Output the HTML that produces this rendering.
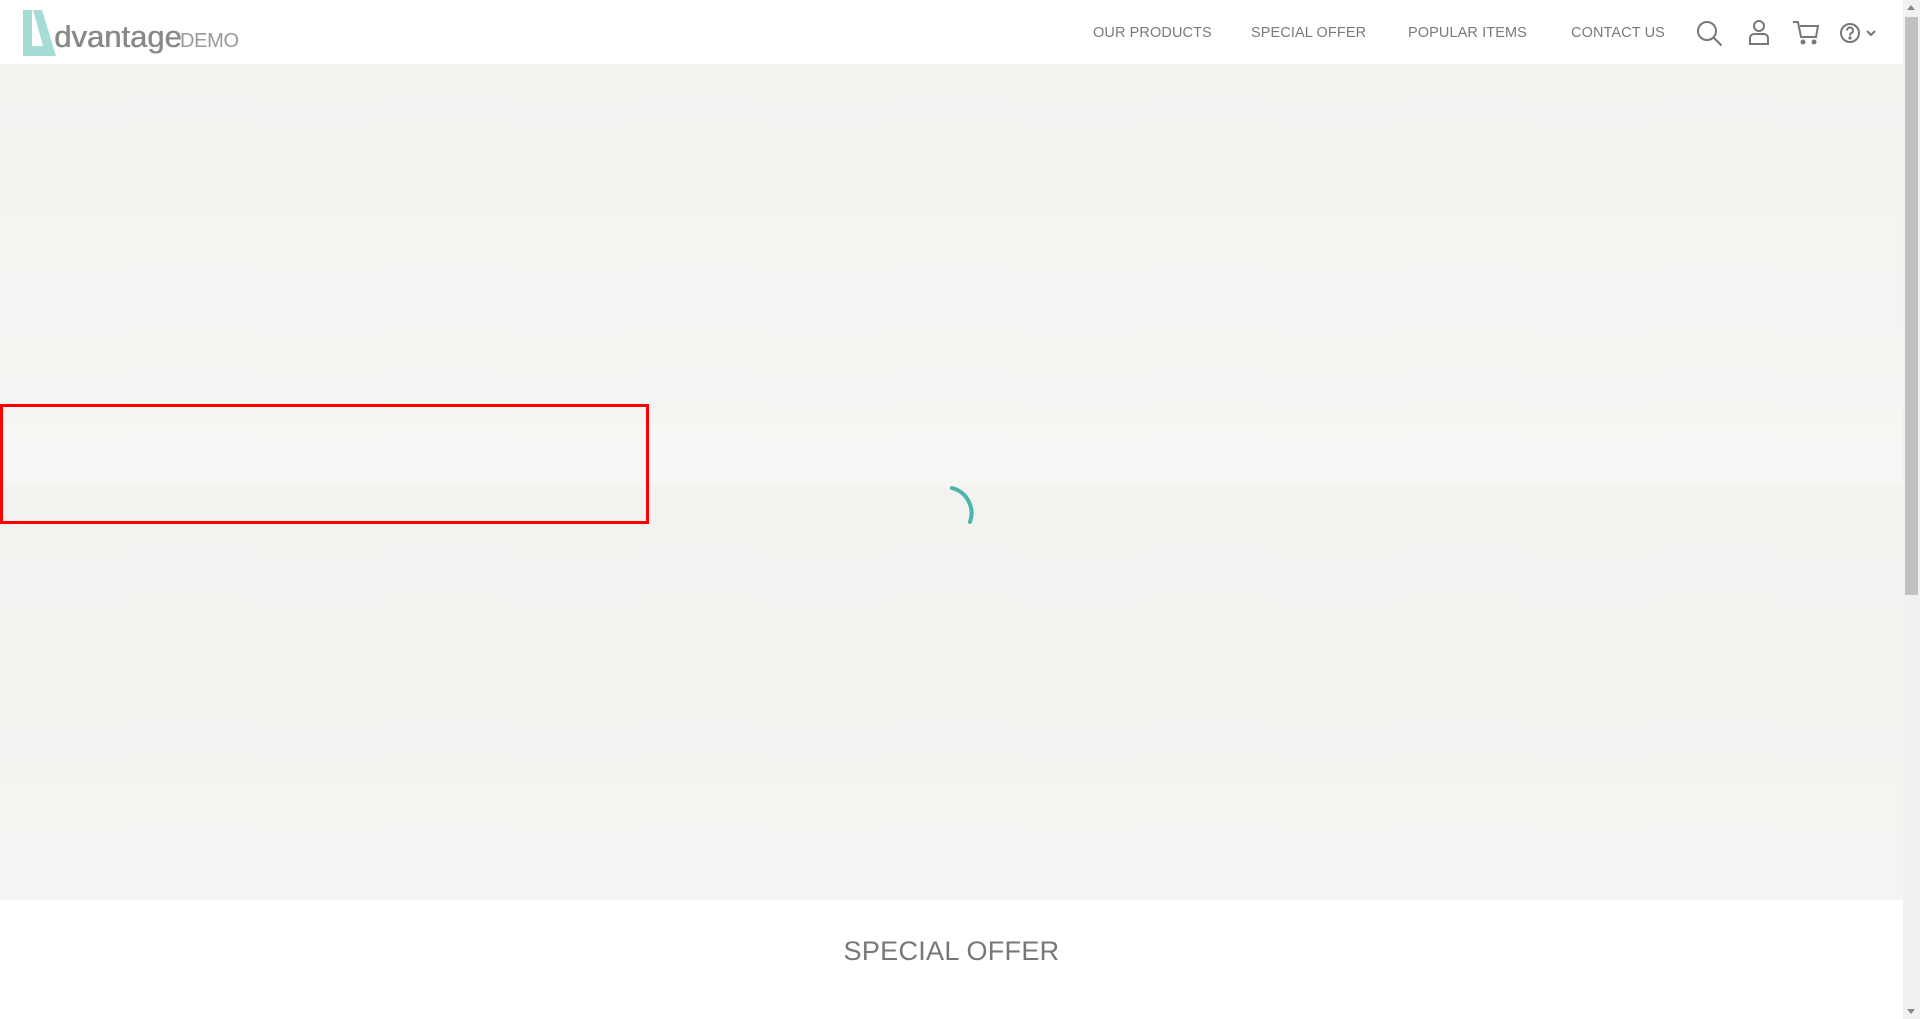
<!DOCTYPE html>
<html><head><meta charset="utf-8"><style>
*{margin:0;padding:0;box-sizing:border-box}
html,body{width:1920px;height:1019px;overflow:hidden;background:#fff;font-family:"Liberation Sans",sans-serif}
.hdr{position:absolute;left:0;top:0;width:1903px;height:64px;background:#fff}
.logo{position:absolute;left:23px;top:10px}
.nav{position:absolute;top:25px;font-size:14.5px;color:#7a7a7a;letter-spacing:0.1px}
.hero{position:absolute;left:0;top:64px;width:1903px;height:836px;background:linear-gradient(#f2f2ef,#f6f6f4 50%,#f2f2ef 51%,#f5f4f2)}
.so{position:absolute;left:0;width:1903px;top:936px;text-align:center;font-size:27px;color:#777;letter-spacing:0.3px}
.sb{position:absolute;left:1903px;top:0;width:17px;height:1019px;background:#f1f1f1}
.thumb{position:absolute;left:1905px;top:17px;width:13px;height:578px;background:#c1c1c1}
.red{position:absolute;left:0;top:404px;width:649px;height:120px;border:3px solid #f00}
</style></head><body>
<div class="hero"></div>
<div class="hdr">
<svg class="logo" width="34" height="46" viewBox="0 0 34 46"><path d="M0 0h9v36h11L10 0h9l14 46H0z" fill="#a6dcd6"/></svg>
<div style="position:absolute;left:54px;top:19px;font-size:31px;color:#888;letter-spacing:0px;text-shadow:0.6px 0 0 #888">dvantage</div>
<div style="position:absolute;left:180px;top:30px;font-size:20px;color:#999;letter-spacing:-0.3px">DEMO</div>
<div class="nav" style="left:1093px">OUR PRODUCTS</div>
<div class="nav" style="left:1251px">SPECIAL OFFER</div>
<div class="nav" style="left:1408px">POPULAR ITEMS</div>
<div class="nav" style="left:1571px">CONTACT US</div>
<svg style="position:absolute;left:1696px;top:20px" width="28" height="28" viewBox="0 0 28 28" fill="none" stroke="#777" stroke-width="2"><circle cx="11" cy="11" r="9"/><path d="M17.5 17.5l8 8"/></svg>
<svg style="position:absolute;left:1748px;top:19px" width="22" height="26" viewBox="0 0 22 26" fill="none" stroke="#777" stroke-width="2"><circle cx="11" cy="7" r="5"/><path d="M2 25v-6a4 4 0 0 1 4-4h10a4 4 0 0 1 4 4v6z"/></svg>
<svg style="position:absolute;left:1792px;top:20px" width="28" height="26" viewBox="0 0 28 26" fill="none" stroke="#777" stroke-width="2"><path d="M1 2h5l3 15h15l2-11H8"/><circle cx="11" cy="22" r="1.5" fill="#777"/><circle cx="22" cy="22" r="1.5" fill="#777"/></svg>
<svg style="position:absolute;left:1840px;top:22px" width="40" height="22" viewBox="0 0 40 22" fill="none" stroke="#777" stroke-width="2"><circle cx="10" cy="11" r="9"/><path d="M7 8.5a3 3 0 1 1 4 2.8c-1 .4-1 1-1 2.2"/><circle cx="10" cy="16" r=".6" fill="#777"/><path d="M27 9l4 4 4-4"/></svg>
</div>
<svg style="position:absolute;left:915px;top:480px" width="70" height="70" viewBox="0 0 70 70" fill="none"><path d="M37 8a26 26 0 0 1 18 34" stroke="#4ab5aa" stroke-width="4" stroke-linecap="round"/></svg>
<div class="red"></div>
<div class="so">SPECIAL OFFER</div>
<div class="sb"></div><div class="thumb"></div>
<div style="position:absolute;left:1907px;top:5px;border:4px solid transparent;border-bottom:5px solid #888;border-top:0"></div>
<div style="position:absolute;left:1907px;top:1009px;border:4px solid transparent;border-top:5px solid #888;border-bottom:0"></div>
</body></html>
